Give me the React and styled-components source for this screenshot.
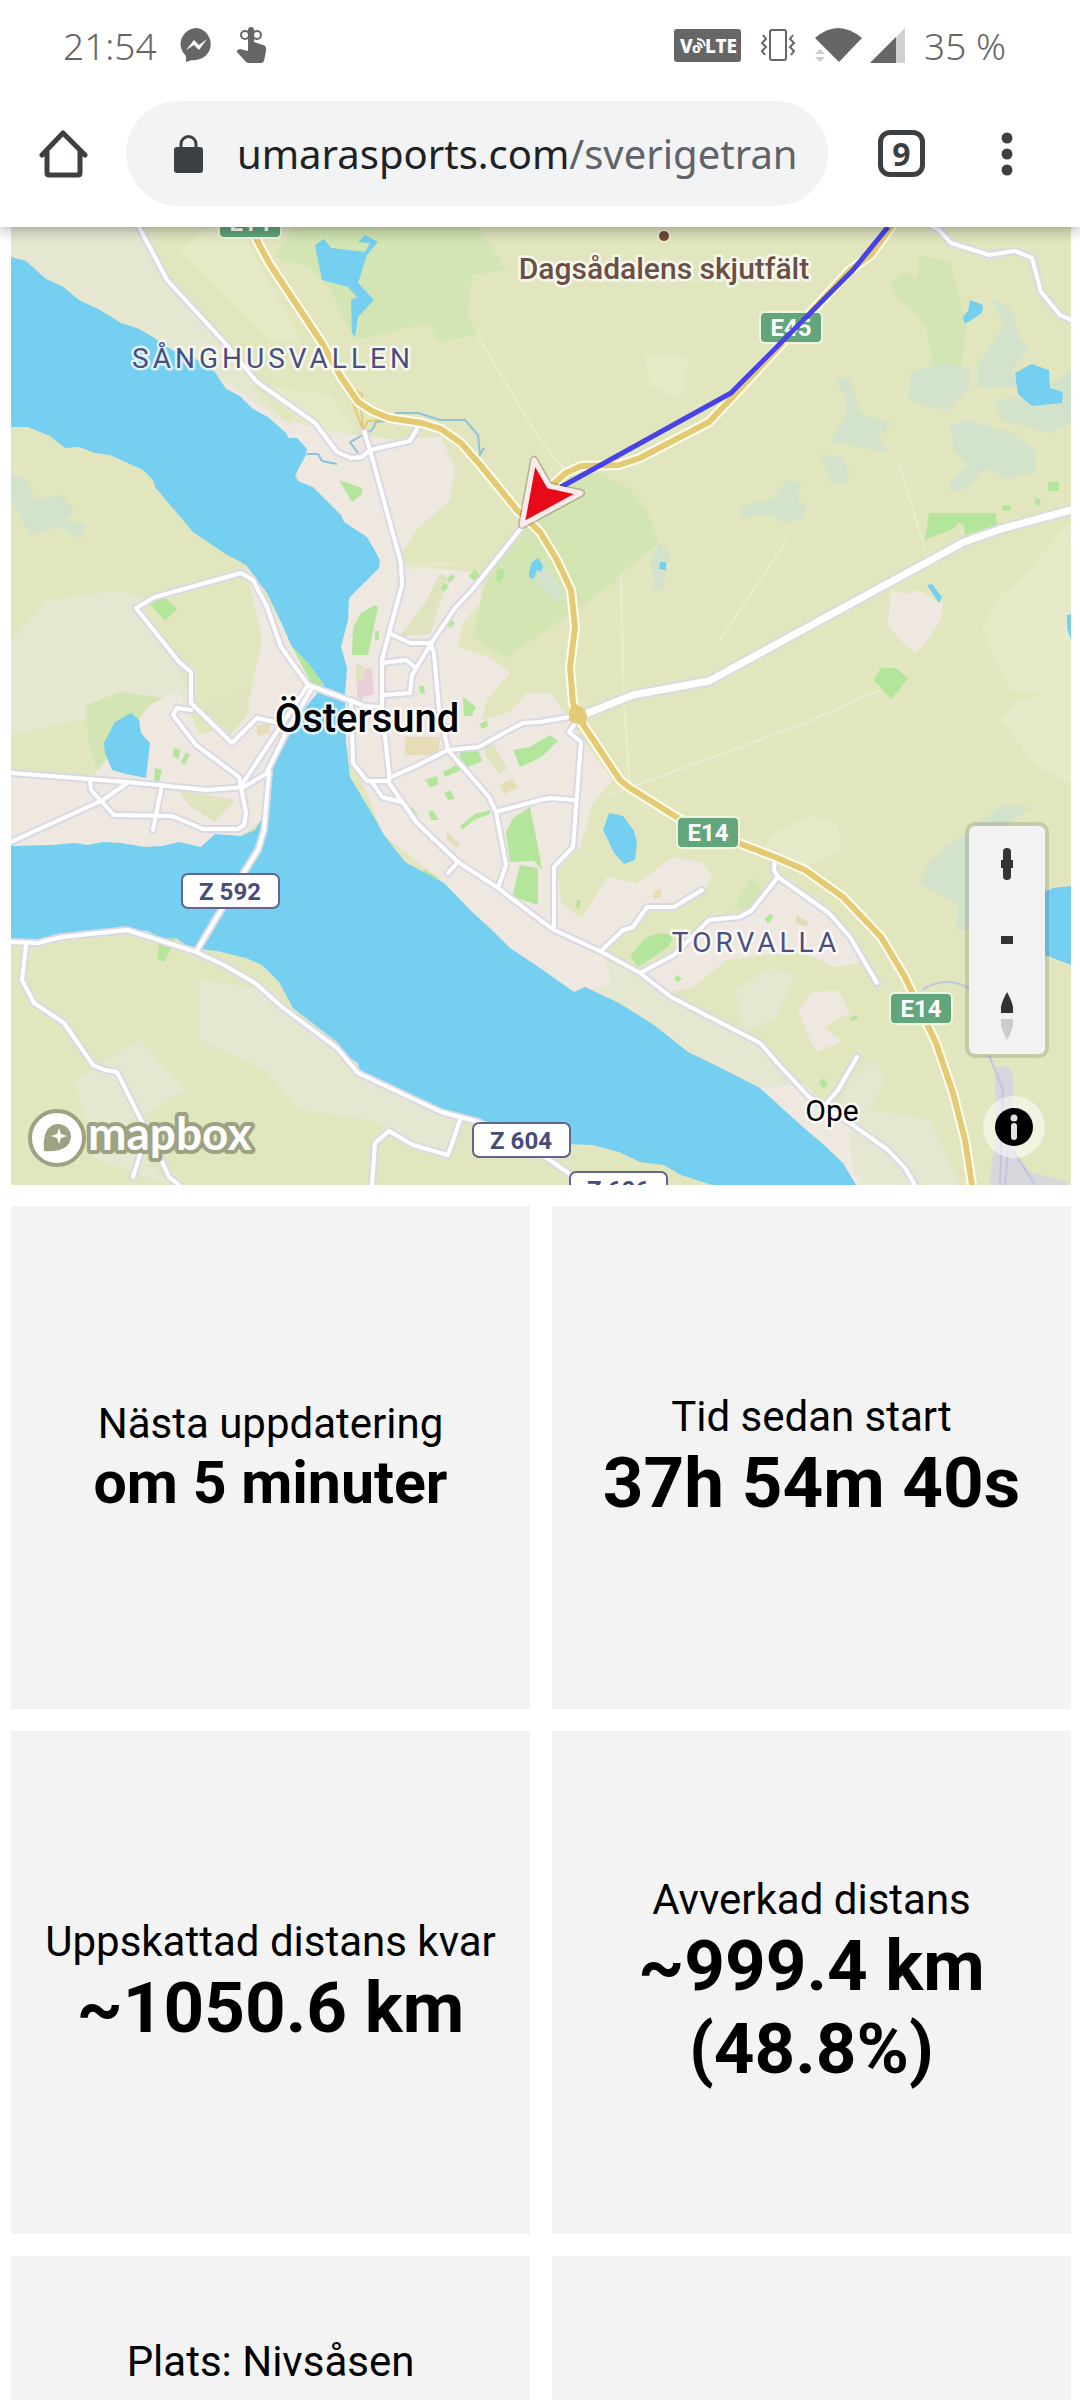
import React from "react";
import styled, { createGlobalStyle } from "styled-components";

const GlobalStyle = createGlobalStyle`
  * {
    box-sizing: border-box;
  }
  body {
    margin: 0;
    background: #fff;
    font-family: Roboto, "Liberation Sans", sans-serif;
  }
  button {
    border: 0;
    padding: 0;
    background: none;
    font: inherit;
    cursor: pointer;
  }
`;

const Screen = styled.div`
  height: 100vh;
  display: flex;
  flex-direction: column;
`;

const Header = styled.header`
  position: relative;
  z-index: 2;
  background: #fff;
  box-shadow: 0 2px 14px rgba(0, 0, 0, 0.35);
`;

const StatusBar = styled.div`
  display: flex;
  justify-content: space-between;
  align-items: center;
  height: 90px;
  padding: 0 74px 0 63px;
  color: #666;
  font-family: "Noto Sans", sans-serif;
  font-size: 37px;
  font-weight: 300;
`;

const StatusGroup = styled.div`
  display: flex;
  align-items: center;
  gap: ${props => props.gap}px;
`;

const Toolbar = styled.div`
  display: flex;
  align-items: center;
  height: 137px;
  padding: 0 49px 10px 39px;
`;

const ToolButton = styled.button`
  flex: none;
  width: 49px;
  height: 49px;
  display: flex;
  align-items: center;
  justify-content: center;
`;

const AddressBar = styled.button`
  flex: 1;
  min-width: 0;
  height: 105px;
  margin: 0 49px 0 38px;
  padding: 0 16px 0 48px;
  display: flex;
  align-items: center;
  gap: 34px;
  border-radius: 53px;
  background: #f1f3f4;
`;

const Url = styled.span`
  overflow: hidden;
  white-space: nowrap;
  font-family: "Noto Sans", sans-serif;
  font-size: 40px;
  color: #202124;
`;

const UrlPath = styled.span`
  color: #5f6368;
`;

const TabCount = styled.span`
  width: 47px;
  height: 47px;
  display: flex;
  align-items: center;
  justify-content: center;
  border: 5px solid #3c4043;
  border-radius: 12px;
  color: #3c4043;
  font-family: "Noto Sans", sans-serif;
  font-size: 32px;
  font-weight: 700;
`;

const MenuButton = styled(ToolButton)`
  margin-left: 56px;
`;

const Page = styled.main`
  flex: 1;
  min-height: 0;
  overflow-y: auto;
  scrollbar-width: none;
  padding: 0 9px 0 11px;
`;

const MapBox = styled.section`
  position: relative;
  overflow: hidden;
  background: #e1e6bf;
`;

const MapCanvas = styled.svg`
  display: block;
  width: 100%;
  height: auto;
`;

const Place = styled.text`
  font-size: ${props => props.$size}px;
  font-weight: ${props => props.$weight || 400};
  fill: ${props => props.$color || "#000"};
  stroke: rgba(255, 255, 255, 0.75);
  stroke-width: 5px;
  stroke-linejoin: round;
  paint-order: stroke;
  text-anchor: middle;
`;

const District = styled(Place)`
  letter-spacing: 4px;
`;

const ShieldText = styled.text`
  font-size: 24px;
  font-weight: 700;
  fill: ${props => props.$color};
  text-anchor: middle;
`;

const Wordmark = styled.text`
  font-family: Lato, sans-serif;
  font-size: 46px;
  font-weight: 700;
  fill: #fff;
  stroke: #9da283;
  stroke-width: 8px;
  stroke-linejoin: round;
  paint-order: stroke;
`;

const MapControls = styled.div`
  position: absolute;
  right: 26px;
  bottom: 131px;
  width: 76px;
  border-radius: 6px;
  background: #f2f2f2;
  box-shadow: 0 0 0 4px rgba(0, 0, 0, 0.12);
`;

const ControlButton = styled.button`
  width: 100%;
  height: 76px;
  display: flex;
  align-items: center;
  justify-content: center;
`;

const InfoButton = styled.button`
  position: absolute;
  right: 26px;
  bottom: 27px;
  width: 62px;
  height: 62px;
  display: flex;
  align-items: center;
  justify-content: center;
  border-radius: 50%;
  background: rgba(255, 255, 255, 0.5);
`;

const Stats = styled.section`
  display: grid;
  grid-template-columns: 1fr 1fr;
  gap: 22px;
  padding: 21px 0 22px;
`;

const Card = styled.article`
  min-height: 503px;
  padding: ${props => (props.$top ? "81px 16px" : "0 16px")};
  display: flex;
  flex-direction: column;
  justify-content: ${props => (props.$top ? "flex-start" : "center")};
  text-align: center;
  background: #f3f3f3;
  color: #000;
`;

const Label = styled.div`
  font-size: 42px;
  line-height: 49px;
`;

const Value = styled.div`
  font-size: ${props => (props.$small ? 59 : 71)}px;
  line-height: ${props => (props.$small ? 69 : 83)}px;
  font-weight: 700;
`;

const stats = [
  { label: "Nästa uppdatering", lines: ["om 5 minuter"], small: true },
  { label: "Tid sedan start", lines: ["37h 54m 40s"] },
  { label: "Uppskattad distans kvar", lines: ["~1050.6 km"] },
  { label: "Avverkad distans", lines: ["~999.4 km", "(48.8%)"] },
  { label: "Plats: Nivsåsen", lines: [], top: true },
  { label: "", lines: [], top: true }
];

const mainLake =
  "11,257 26,261 46,279 62,286 79,300 100,310 121,323 137,328 153,337 172,350 193,357 215,372 226,389 240,396 253,409 268,417 286,433 289,438 297,438 307,449 306,455 295,475 298,481 313,487 341,515 344,522 367,537 380,560 379,568 365,582 349,598 348,620 341,647 347,668 345,695 346,743 350,777 374,817 384,835 405,862 444,883 472,912 492,930 510,948 540,968 574,992 585,987 619,1003 654,1025 688,1052 719,1067 760,1088 795,1120 826,1147 843,1163 856,1185 712,1185 681,1175 664,1165 640,1162 619,1152 592,1145 540,1143 482,1123 458,1117 434,1108 403,1093 360,1071 358,1063 348,1057 337,1042 293,1008 279,982 262,965 246,958 217,951 201,949 186,945 176,938 162,939 148,931 121,929 62,937 38,943 11,938 11,846 52,845 74,843 88,845 103,842 121,843 145,847 162,846 179,842 201,847 215,834 241,836 255,830 262,818 270,787 272,768 288,738 306,707 324,685 310,665 291,645 281,622 267,593 246,565 224,553 193,532 155,487 153,480 143,470 110,455 95,453 79,447 65,448 50,436 28,427 11,427";

const ponds = [
  "315,245 324,239 331,248 365,252 370,243 358,242 365,235 378,242 367,255 358,283 374,300 358,317 355,337 352,333 351,300 357,297 348,287 322,280",
  "104,743 115,722 131,713 139,720 141,733 150,743 146,778 126,774 112,770 105,753",
  "603,830 609,813 623,816 634,831 637,843 635,860 624,864 614,853 608,840",
  "970,300 983,305 982,313 965,324 963,317 968,311",
  "1015,373 1031,364 1049,370 1050,388 1063,392 1062,403 1032,406 1018,394",
  "927,585 932,584 942,597 939,603 935,597",
  "1067,615 1071,614 1071,640 1067,628",
  "660,562 666,562 666,570 659,569",
  "529,572 532,562 538,558 543,566 541,572 537,570 534,579 529,577",
  "1040,894 1053,888 1071,886 1071,965 1040,953"
];

const urban = [
  "297,438 290,420 330,432 400,440 440,436 455,468 450,500 418,528 402,552 395,570 430,568 483,573 480,603 463,623 457,647 490,657 510,673 487,700 482,720 510,712 527,693 550,693 570,720 580,737 613,780 593,803 580,847 557,870 562,905 582,918 607,877 637,883 673,857 703,863 712,877 703,893 647,910 603,950 612,985 574,992 510,948 444,883 384,835 346,743 341,647 349,598 380,560 344,522 298,481",
  "11,770 90,780 150,705 178,690 200,735 245,720 262,640 246,565 281,622 310,665 324,685 288,738 272,768 262,820 241,836 201,847 11,846",
  "777,877 820,907 850,937 860,963 833,967 800,950 727,960 693,987 667,993 640,973 677,953 713,920 750,913",
  "777,1087 803,1083 830,1110 850,1130 852,1165 862,1185 856,1185 826,1147 795,1120 760,1088",
  "891,590 905,594 918,590 943,605 941,620 926,642 915,653 900,640 888,625",
  "798,1010 812,993 838,990 850,1013 824,1027 842,1042 816,1052 808,1035",
  "210,372 240,392 300,432 315,480 345,515 380,560 362,530 298,470 250,408"
];

const clearings = [
  "427,600 440,573 448,578 430,634 400,636",
  "485,738 492,742 507,768 500,775 486,757",
  "178,790 208,795 235,800 215,822 190,806",
  "215,700 245,690 250,712 228,737 200,715",
  "356,665 364,665 362,682 356,683"
];

const beige = [
  "11,227 139,227 165,283 224,342 240,375 300,435 289,438 226,389 153,337 79,300 11,257",
  "48,600 120,590 155,602 136,612 179,665 191,703 80,720 11,735 11,640",
  "200,980 270,990 350,1060 455,1117 445,1160 370,1120 300,1110 265,1070 200,1040",
  "75,1080 140,1040 185,1090 120,1130 170,1185 95,1160",
  "612,960 640,975 671,997 760,1043 781,1067 800,1090 760,1088 688,1052 619,1003 585,987",
  "735,990 770,968 795,975 775,1020 745,1030",
  "850,1080 875,1060 885,1080 870,1110 930,1120 960,1185 862,1185 830,1130"
];

const forest = [
  "275,257 293,227 479,227 506,270 472,275 468,317 477,335 437,342 430,323 356,340 344,320 331,290 310,268",
  "598,473 628,487 647,510 659,543 621,573 614,583 540,635 505,658 473,637 483,593 499,553 524,525 540,510 570,475",
  "919,255 950,262 967,327 960,373 948,385 936,380 927,330 912,310 898,300 890,283 905,272 917,278",
  "86,705 120,692 180,700 178,735 155,790 100,778 88,740",
  "736,903 752,878 762,886 748,914 735,908"
];

const meadow = [
  "1020,580 1071,520 1071,700 1010,690 982,628 995,600",
  "1020,700 1071,690 1071,784 1035,765 1000,720",
  "180,400 260,385 330,395 355,430 330,445 280,405 235,355",
  "645,355 690,358 680,400 650,385",
  "558,520 580,510 600,530 618,560 612,575 590,570",
  "180,250 210,227 240,227 300,340 270,340",
  "770,835 810,815 838,824 842,850 800,870 765,850",
  "398,563 470,562 430,568 400,590"
];

const wetland = [
  "836,380 850,379 860,413 893,422 879,438 886,452 831,442 845,417 845,397",
  "819,455 840,456 850,472 845,486 831,482 826,465",
  "738,507 774,497 788,479 802,485 796,495 806,507 803,517 784,524 771,515 743,517",
  "950,425 967,419 1012,433 1036,450 1036,472 1005,479 986,467 967,487 951,493 950,483 967,465 953,450",
  "910,372 943,363 970,367 970,387 946,411 908,400",
  "991,297 1012,310 1019,337 1029,348 1012,370 1019,387 979,387 977,367 988,347 1005,327",
  "995,400 1035,396 1071,370 1071,423 1051,433 1001,420",
  "650,558 660,543 670,553 663,590 654,590",
  "11,475 28,480 35,500 60,495 75,510 65,520 86,525 80,540 60,527 30,535 11,500",
  "1005,803 1030,808 1000,830 969,930 955,930 958,905 920,883 930,860",
  "543,560 562,590 558,603 535,582"
];

const parks = [
  "339,480 362,488 362,494 352,502",
  "375,605 378,607 368,655 352,655 353,628 361,613",
  "291,645 318,670 323,687 312,684",
  "506,832 513,818 530,807 540,857 542,870 534,861 510,862",
  "520,865 538,868 538,905 512,897",
  "513,750 530,747 550,735 558,741 540,758 520,767",
  "630,957 645,938 660,933 674,935 668,947 638,967",
  "874,680 881,668 896,668 908,679 891,699",
  "929,513 996,513 997,525 965,535 964,526 958,522 955,528 925,540",
  "148,602 165,598 177,609 165,621",
  "155,768 162,770 159,783 154,782",
  "174,748 181,750 178,759 173,756",
  "186,752 190,755 184,765 181,762",
  "160,940 176,938 164,962 157,959",
  "460,752 478,750 482,761 445,777 443,772 460,763",
  "425,780 437,776 438,785 430,787",
  "444,793 450,790 455,799 448,800",
  "411,806 418,815 416,815 411,808",
  "428,812 432,810 439,820 431,820",
  "423,869 441,879 425,876",
  "460,826 475,814 490,810 490,814 474,820 462,830",
  "469,576 475,569 480,575 474,581",
  "447,579 451,574 455,577 450,583",
  "441,588 445,583 449,586 444,592",
  "447,624 452,620 455,624 450,628",
  "375,631 379,631 379,640 375,640",
  "419,686 424,686 425,694 420,693",
  "497,570 503,568 505,575 500,584 496,580",
  "765,919 770,913 774,917 768,924",
  "819,1082 824,1078 828,1085 823,1088",
  "850,1018 856,1015 858,1019 852,1021",
  "577,900 581,900 579,909 576,908",
  "674,978 678,975 682,979 677,982",
  "1048,482 1059,482 1059,491 1048,491",
  "1035,498 1041,499 1039,506 1035,504",
  "1002,505 1011,506 1010,511 1002,510",
  "463,697 476,707 472,716 464,716",
  "479,724 487,720 488,726 482,729"
];

const sand = [
  "405,737 440,737 438,755 405,755",
  "256,726 270,722 270,733 258,736",
  "500,785 512,779 518,787 504,794",
  "447,832 460,845 456,848 446,838",
  "653,892 662,888 660,897 654,899",
  "796,915 809,922 806,927 796,923"
];

const streets = [
  "139,227 167,280 224,342 257,382 315,423 337,452 351,458 362,457 370,450 410,441 418,427",
  "363,428 370,450 401,563 402,585 389,633 382,660 382,710 389,772 389,783 417,823 458,862 498,888 540,920 554,930 602,952 640,973 671,997 760,1043 781,1067 809,1097 850,1123 888,1150 905,1168 915,1185",
  "522,527 472,590 455,608 432,642 412,675 410,693 384,695",
  "389,633 410,643 430,643 434,653 439,708 448,750 489,797 496,812 506,865 498,888",
  "382,663 406,660 415,667",
  "389,778 418,765 448,750 479,747 500,735 523,723 540,722 575,716",
  "496,812 540,800 550,798 574,800",
  "574,725 569,732 581,742 573,847 554,867 554,927",
  "602,950 623,930 633,927 647,907 674,907 702,890",
  "640,973 674,955 709,920 740,917 752,910 778,877 774,870 775,853",
  "778,877 829,913 850,937 877,983",
  "857,1057 838,1090 826,1104",
  "922,220 939,230 951,243 989,255 1015,251 1032,258 1041,292 1060,315 1071,320",
  "308,685 281,647 267,607 253,580 241,573 155,597 136,608 179,662 191,672 191,703 232,743 257,718 275,722",
  "191,710 177,708 173,715 196,745 239,777 246,813 244,825 238,829 203,829 172,816 114,815 91,790 90,780",
  "11,773 127,782 207,790 244,787 269,772 264,830 258,850 241,877 196,952",
  "243,783 308,685 365,706 382,707",
  "267,772 286,733 312,688",
  "11,842 103,800 127,783",
  "162,785 153,830",
  "351,700 353,763 367,781 389,781",
  "372,782 382,797 401,802",
  "458,862 448,873",
  "11,942 38,943 62,937 127,930 196,952 224,965 255,983 282,1007 337,1048 358,1073 441,1112 479,1122 547,1158 571,1175",
  "26,945 22,980 34,1003 64,1023 93,1065 105,1070 117,1072 141,1120 158,1153 169,1177 179,1185",
  "146,1135 133,1177",
  "372,1185 375,1143 389,1131 413,1145 448,1155 460,1120"
];

const creeks = [
  "307,454 318,454 322,461 337,464",
  "395,413 418,413 440,420 465,420 478,435 480,455 484,448",
  "358,453 350,442 372,430 376,422 385,421"
];

const paths = [
  "477,335 540,440 565,470",
  "621,573 624,700 630,790",
  "610,795 800,725 880,690",
  "898,460 925,550",
  "787,540 720,640"
];

const e14 =
  "250,227 269,263 322,343 341,377 358,402 372,411 389,418 422,423 441,429 461,443 482,467 517,510 540,532 557,560 571,590 575,627 570,667 573,703 578,717 602,753 620,780 630,788 678,818 741,844 775,857 805,870 843,897 881,937 905,977 919,1007 936,1043 953,1093 965,1140 972,1185";

const e45 =
  "891,227 871,255 850,270 728,402 709,422 640,458 619,465 581,466 566,473 550,487 525,510";

const eastRoad = "578,717 588,713 633,695 709,681 964,542 1001,529 1071,510";

const Shapes = ({ list, ...rest }) => (
  <g {...rest}>
    {list.map(points => (
      <polygon key={points} points={points} />
    ))}
  </g>
);

const Lines = ({ list, casing, color, width, edge = 2 }) => (
  <g fill="none" strokeLinejoin="round" strokeLinecap="round">
    <g stroke={casing} strokeWidth={width + edge * 2}>
      {list.map(points => (
        <polyline key={points} points={points} />
      ))}
    </g>
    <g stroke={color} strokeWidth={width}>
      {list.map(points => (
        <polyline key={points} points={points} />
      ))}
    </g>
  </g>
);

const EuroShield = ({ x, y, children }) => (
  <g>
    <rect x={x} y={y} width="64" height="33" rx="6" fill="#f0f5df" />
    <rect x={x + 2} y={y + 2} width="60" height="29" rx="4" fill="#63a67b" />
    <ShieldText x={x + 32} y={y + 25} $color="#fff">
      {children}
    </ShieldText>
  </g>
);

const CountyShield = ({ x, y, children }) => (
  <g>
    <rect
      x={x + 1}
      y={y + 1}
      width="97"
      height="34"
      rx="6"
      fill="#fff"
      stroke="#61658f"
      strokeWidth="2"
    />
    <ShieldText x={x + 49} y={y + 27} $color="#484c78">
      {children}
    </ShieldText>
  </g>
);

const TrackingMap = () => (
  <MapCanvas viewBox="11 227 1060 958" role="img" aria-label="Karta">
    <rect x="11" y="227" width="1060" height="958" fill="#e1e6bf" />
    <Shapes list={meadow} fill="#e6eac8" />
    <Shapes list={beige} fill="#e6e7d1" />
    <Shapes list={forest} fill="#d2e5b3" />
    <Shapes list={wetland} fill="#d3e3cb" />
    <Shapes list={urban} fill="#efe8e1" />
    <Shapes list={clearings} fill="#dfe4bf" />
    <Shapes list={sand} fill="#e6dcb8" />
    <polygon
      points="357,683 363,678 365,668 372,669 374,694 363,697 361,702 357,702"
      fill="#e9cfd8"
    />
    <Shapes list={parks} fill="#b3e59b" />
    <g fill="none" stroke="#e9ecd2" strokeWidth="2">
      {paths.map(points => (
        <polyline key={points} points={points} />
      ))}
    </g>

    {/* railway yard */}
    <polygon
      points="995,1067 1008,1066 1013,1075 1013,1150 1030,1172 1067,1182 1067,1185 989,1185 996,1133"
      fill="#d6d6dd"
    />
    <g fill="none" stroke="#c3c5dc" strokeWidth="2">
      <path d="M922 990Q940 978 960 984L969 988M989 1055L1003 1090L1000 1185M1008 1150L1005 1185M1013 1150L1035 1185" />
    </g>

    <polygon points={mainLake} fill="#75cff0" />
    <Shapes list={ponds} fill="#75cff0" />
    <g fill="none" stroke="#8fc3da" strokeWidth="2">
      {creeks.map(points => (
        <polyline key={points} points={points} />
      ))}
    </g>

    <Lines list={streets} casing="#d9d8e4" color="#fff" width={4} />
    <Lines list={[eastRoad]} casing="#d9dbdf" color="#fff" width={7} />
    <g fill="none" stroke="#e5c975" strokeWidth="2">
      <path d="M345 385L362 394L361 405L363 430M350 395L363 430M363 430L368 421L380 420" />
    </g>
    <Lines list={[e45, e14]} casing="#fffdf0" color="#e5ca74" width={6} />
    <path
      d="M573 703L584 710L586 716L585 724L578 723L570 720L570 714Z"
      fill="#e5ca74"
      stroke="#e5ca74"
      strokeWidth="2"
      strokeLinejoin="round"
    />

    <circle cx="664" cy="236" r="7" fill="#efeacb" />
    <circle cx="664" cy="236" r="5" fill="#704a3b" />
    <EuroShield x={218} y={206}>
      E14
    </EuroShield>
    <EuroShield x={759} y={311}>
      E45
    </EuroShield>
    <EuroShield x={676} y={816}>
      E14
    </EuroShield>
    <EuroShield x={889} y={992}>
      E14
    </EuroShield>
    <CountyShield x={181} y={873}>
      Z 592
    </CountyShield>
    <CountyShield x={472} y={1122}>
      Z 604
    </CountyShield>
    <CountyShield x={569} y={1171}>
      Z 606
    </CountyShield>

    <Place x="664" y="279" $size={30} $weight={500} $color="#6b4f42">
      Dagsådalens skjutfält
    </Place>
    <District x="273" y="368" $size={28} $color="#4a4f80">
      SÅNGHUSVALLEN
    </District>
    <District x="756" y="952" $size={28} $color="#4a4f80">
      TORVALLA
    </District>
    <Place x="367" y="732" $size={40} $weight={500}>
      Östersund
    </Place>
    <Place x="832" y="1121" $size={30}>
      Ope
    </Place>

    <polyline
      points="888,227 853,270 731,393 561,487"
      fill="none"
      stroke="#4743e6"
      strokeWidth="5"
      strokeLinejoin="round"
    />
    <path
      d="M534 460L522 525L581 493L549 486Z"
      fill="none"
      stroke="rgba(60,60,40,0.3)"
      strokeWidth="8"
      strokeLinejoin="round"
    />
    <path
      d="M534 460L522 525L581 493L549 486Z"
      fill="#e70a18"
      stroke="#fbeaea"
      strokeWidth="5"
      strokeLinejoin="round"
    />

    <circle cx="57" cy="1138" r="27" fill="#fff" stroke="#9da283" strokeWidth="4" />
    <path
      d="M44 1151C43 1137 45 1125 58 1124A13 13 0 0 1 71 1137C70 1149 58 1152 44 1151Z"
      fill="#9da283"
    />
    <path
      d="M59 1128L61 1134L67 1136L61 1138L59 1144L57 1138L51 1136L57 1134Z"
      fill="#fff"
    />
    <Wordmark x="88" y="1150">
      mapbox
    </Wordmark>
  </MapCanvas>
);

const MessengerIcon = () => (
  <svg width="33" height="34" viewBox="0 0 33 34" aria-hidden="true">
    <path
      d="M17 0A16 16 0 1 1 12 32L6 34V28A16 16 0 0 1 17 0Z"
      fill="#666"
    />
    <path d="M6 22L14 12L19 17L27 11L19 22L14 17Z" fill="#fff" />
  </svg>
);

const ReminderIcon = () => (
  <svg width="31" height="38" viewBox="0 0 31 38" aria-hidden="true">
    <path
      d="M12 4A3 3 0 0 1 18 4V16L27 19Q31 20 30 25L28 35Q27 37 25 37H13Q11 37 10 36L1 26Q0 24 4 23L12 25Z"
      fill="#666"
    />
    <g fill="none" stroke="#666" strokeWidth="2">
      <circle cx="9" cy="9" r="4" />
      <circle cx="21" cy="9" r="4" />
    </g>
  </svg>
);

const VolteIcon = () => (
  <svg width="67" height="33" viewBox="0 0 67 33" aria-hidden="true">
    <rect width="67" height="33" rx="3" fill="#666" />
    <g fill="#fff" fontFamily="Noto Sans, sans-serif" fontWeight="800">
      <text x="6" y="24" fontSize="19">
        V
      </text>
      <text x="18" y="24" fontSize="14">
        o
      </text>
      <text x="31" y="24" fontSize="19">
        LTE
      </text>
    </g>
    <g fill="none" stroke="#fff" strokeWidth="2">
      <path d="M23 14Q27 14 28 19M23 10Q30 10 31 17" />
    </g>
  </svg>
);

const VibrateIcon = () => (
  <svg width="36" height="34" viewBox="0 0 36 34" aria-hidden="true">
    <g fill="none" stroke="#666" strokeWidth="2">
      <rect x="10" y="2" width="16" height="30" rx="2" />
      <path d="M3 7L6 11L2 15L6 19L2 23L5 27M33 7L30 11L34 15L30 19L34 23L31 27" />
    </g>
  </svg>
);

const WifiIcon = () => (
  <svg width="48" height="34" viewBox="0 0 48 34" aria-hidden="true">
    <path d="M0 10Q23 -10 47 10L24 34Z" fill="#666" />
    <path d="M0 26L5 21L10 26ZM0 29L5 34L10 29Z" fill="#ccc" />
  </svg>
);

const SignalIcon = () => (
  <svg width="35" height="35" viewBox="0 0 35 35" aria-hidden="true">
    <path d="M35 0V35H0Z" fill="#d0d0d0" />
    <path d="M26 9V35H0Z" fill="#666" />
  </svg>
);

const HomeIcon = () => (
  <svg width="49" height="49" viewBox="0 0 49 49" aria-hidden="true">
    <path
      d="M3 26L24 4L46 26M8 22V44Q8 46 10 46H39Q41 46 41 44V22"
      fill="none"
      stroke="#3c4043"
      strokeWidth="5"
      strokeLinecap="round"
      strokeLinejoin="round"
    />
  </svg>
);

const LockSvg = styled.svg`
  flex: none;
`;

const LockIcon = () => (
  <LockSvg width="29" height="38" viewBox="0 0 29 38" aria-hidden="true">
    <rect y="12" width="29" height="26" rx="3" fill="#3c4043" />
    <path
      d="M7 14V9A7 7 0 0 1 22 9V14"
      fill="none"
      stroke="#3c4043"
      strokeWidth="3"
    />
  </LockSvg>
);

const DotsIcon = () => (
  <svg width="12" height="46" viewBox="0 0 12 46" fill="#3c4043" aria-hidden="true">
    <circle cx="6" cy="7" r="5.5" />
    <circle cx="6" cy="23" r="5.5" />
    <circle cx="6" cy="39" r="5.5" />
  </svg>
);

export default function App() {
  return (
    <Screen>
      <GlobalStyle />
      <Header>
        <StatusBar>
          <StatusGroup gap={23}>
            <span>21:54</span>
            <MessengerIcon />
            <ReminderIcon />
          </StatusGroup>
          <StatusGroup gap={19}>
            <VolteIcon />
            <VibrateIcon />
            <StatusGroup gap={7}>
              <WifiIcon />
              <SignalIcon />
            </StatusGroup>
            <span>35 %</span>
          </StatusGroup>
        </StatusBar>
        <Toolbar>
          <ToolButton aria-label="Home">
            <HomeIcon />
          </ToolButton>
          <AddressBar>
            <LockIcon />
            <Url>
              umarasports.com<UrlPath>/sverigetran</UrlPath>
            </Url>
          </AddressBar>
          <ToolButton aria-label="Tabs">
            <TabCount>9</TabCount>
          </ToolButton>
          <MenuButton aria-label="Menu">
            <DotsIcon />
          </MenuButton>
        </Toolbar>
      </Header>

      <Page>
        <MapBox>
          <TrackingMap />
          <MapControls>
            <ControlButton aria-label="Zoom in">
              <svg width="12" height="32" viewBox="0 0 12 32" fill="#333">
                <rect x="2" width="8" height="32" rx="4" />
                <rect y="12" width="12" height="8" />
              </svg>
            </ControlButton>
            <ControlButton aria-label="Zoom out">
              <svg width="12" height="8" viewBox="0 0 12 8" fill="#333">
                <rect width="12" height="8" />
              </svg>
            </ControlButton>
            <ControlButton aria-label="Reset bearing to north">
              <svg width="12" height="48" viewBox="0 0 12 48">
                <path d="M6 0Q11 9 12 15V21H0V15Q1 9 6 0Z" fill="#333" />
                <path d="M6 48Q11 39 12 33V27H0V33Q1 39 6 48Z" fill="#ccc" />
              </svg>
            </ControlButton>
          </MapControls>
          <InfoButton aria-label="Toggle attribution">
            <svg width="38" height="38" viewBox="0 0 38 38">
              <circle cx="19" cy="19" r="19" />
              <circle cx="19" cy="10" r="3.5" fill="#e2e3e4" />
              <rect x="16" y="15" width="6" height="17" rx="3" fill="#e2e3e4" />
            </svg>
          </InfoButton>
        </MapBox>

        <Stats>
          {stats.map((stat, i) => (
            <Card key={i} $top={stat.top}>
              <Label>{stat.label}</Label>
              {stat.lines.map(line => (
                <Value key={line} $small={stat.small}>
                  {line}
                </Value>
              ))}
            </Card>
          ))}
        </Stats>
      </Page>
    </Screen>
  );
}
